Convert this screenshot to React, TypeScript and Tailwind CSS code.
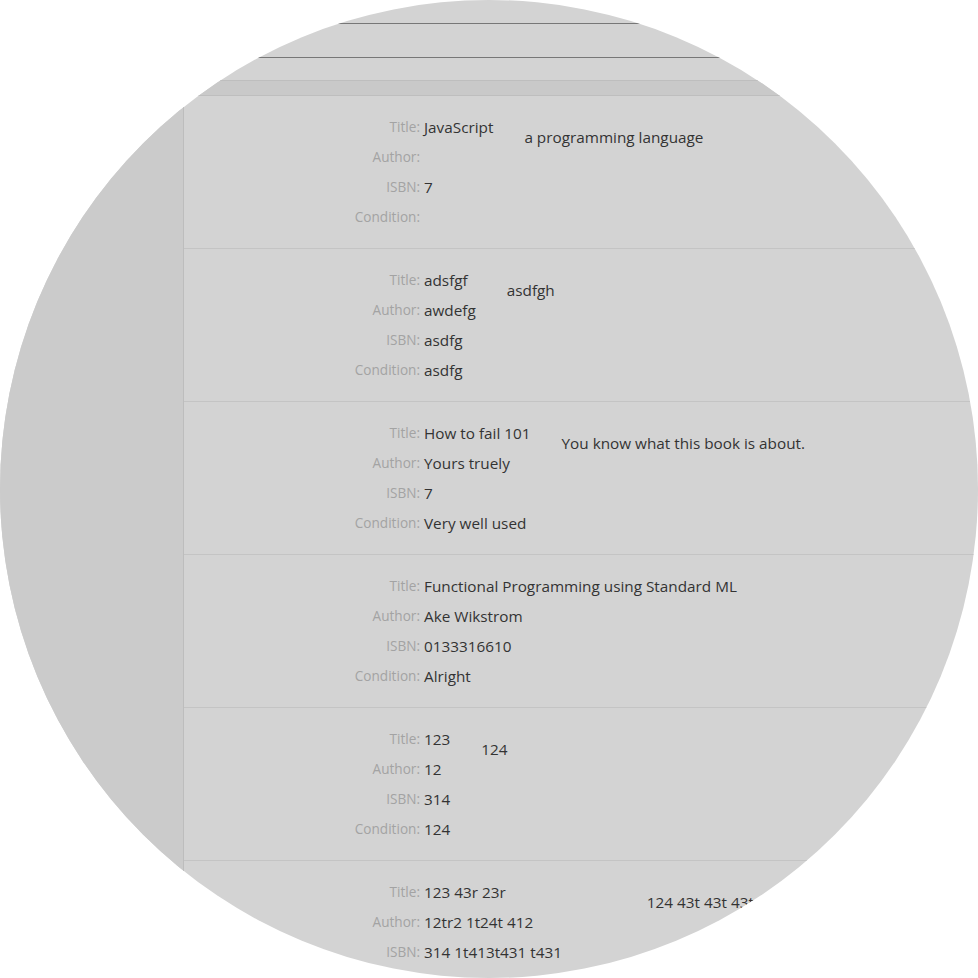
import React from 'react';

type Book = {
  title: string;
  author: string;
  isbn: string;
  condition: string;
  description?: string;
};

const books: Book[] = [
  { title: 'JavaScript', author: '', isbn: '7', condition: '', description: 'a programming language' },
  { title: 'adsfgf', author: 'awdefg', isbn: 'asdfg', condition: 'asdfg', description: 'asdfgh' },
  { title: 'How to fail 101', author: 'Yours truely', isbn: '7', condition: 'Very well used', description: 'You know what this book is about.' },
  { title: 'Functional Programming using Standard ML', author: 'Ake Wikstrom', isbn: '0133316610', condition: 'Alright' },
  { title: '123', author: '12', isbn: '314', condition: '124', description: '124' },
  { title: '123 43r 23r', author: '12tr2 1t24t 412', isbn: '314 1t413t431 t431', condition: '124t43t 43t 341 t431t 4314', description: '124 43t 43t 43t4 3t' },
];

const BookRow: React.FC<{ book: Book }> = ({ book }) => {
  const fields: [string, string][] = [
    ['Title:', book.title],
    ['Author:', book.author],
    ['ISBN:', book.isbn],
    ['Condition:', book.condition],
  ];
  return (
    <div className="flex h-[153px] shrink-0 border-b border-[#c4c4c4] pt-[16px] pl-[156px]">
      <div className="flex">
        <div className="flex w-[80px] flex-col items-end">
          {fields.map(([label]) => (
            <div key={label} className="h-[30px] text-[13.6px] leading-[30px] text-[#a3a3a3]">
              {label}
            </div>
          ))}
        </div>
        <div className="ml-[4px] flex flex-col">
          {fields.map(([label, value]) => (
            <div key={label} className="h-[30px] whitespace-nowrap text-[15.3px] leading-[30px] text-[#333]">
              {value}
            </div>
          ))}
        </div>
      </div>
      {book.description && (
        <div className="ml-[31px] mt-[10px] whitespace-nowrap text-[15.3px] leading-[30px] text-[#333]">
          {book.description}
        </div>
      )}
    </div>
  );
};

export default function App() {
  return (
    <div
      className="h-[978px] w-[978px] overflow-hidden rounded-full bg-[#d3d3d3]"
      style={{ fontFamily: '"Open Sans", "Noto Sans", sans-serif' }}
    >
      {/* header */}
      <div className="h-[80px]">
        <div className="h-[23px]" />
        <div className="h-px bg-[#777]" />
        <div className="h-[33px]" />
        <div className="h-px bg-[#777]" />
      </div>

      {/* toolbar band */}
      <div className="h-[16px] border-y border-[#bebebe] bg-[#c9c9c9]" />

      <div className="flex h-[882px]">
        {/* sidebar */}
        <div className="w-[184px] shrink-0 border-r border-[#bdbdbd] bg-[#cbcbcb]" />

        {/* book list */}
        <div className="flex min-w-0 flex-1 flex-col">
          {books.map((b, i) => (
            <BookRow key={i} book={b} />
          ))}
        </div>
      </div>
    </div>
  );
}
